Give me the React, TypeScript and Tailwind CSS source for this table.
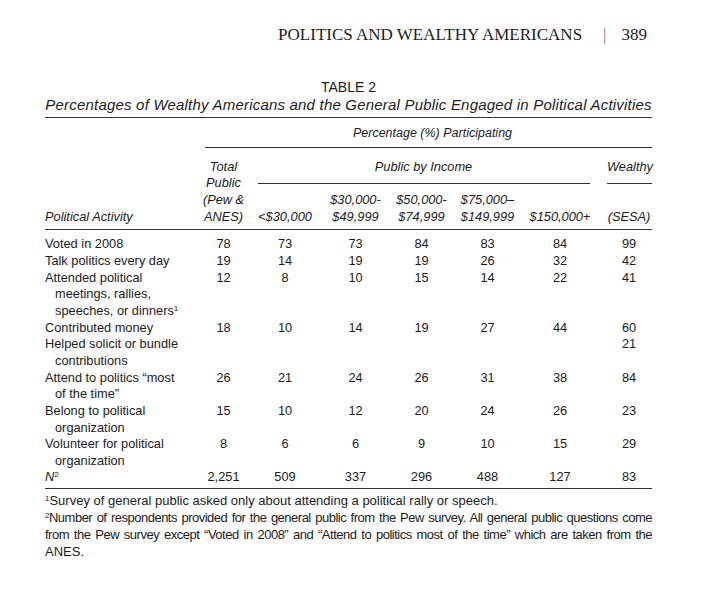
import React from "react";

const sans = "font-['Liberation_Sans',Arial,sans-serif]";

type Row = {
    label: string[];
    sup?: string;
    values: (string | null)[];
};

const rows: Row[] = [
    { label: ["Voted in 2008"], values: ["78", "73", "73", "84", "83", "84", "99"] },
    { label: ["Talk politics every day"], values: ["19", "14", "19", "19", "26", "32", "42"] },
    {
        label: ["Attended political", "meetings, rallies,", "speeches, or dinners"],
        sup: "1",
        values: ["12", "8", "10", "15", "14", "22", "41"],
    },
    { label: ["Contributed money"], values: ["18", "10", "14", "19", "27", "44", "60"] },
    {
        label: ["Helped solicit or bundle", "contributions"],
        values: [null, null, null, null, null, null, "21"],
    },
    {
        label: ["Attend to politics \u201cmost", "of the time\u201d"],
        values: ["26", "21", "24", "26", "31", "38", "84"],
    },
    {
        label: ["Belong to political", "organization"],
        values: ["15", "10", "12", "20", "24", "26", "23"],
    },
    {
        label: ["Volunteer for political", "organization"],
        values: ["8", "6", "6", "9", "10", "15", "29"],
    },
];

const nRow = ["2,251", "509", "337", "296", "488", "127", "83"];

const grid =
    "grid grid-cols-[155px_47px_76px_65px_67px_65px_80px_52px] leading-[16.64px]";

function ValueCells({ values }: { values: (string | null)[] }) {
    return (
        <>
            {values.map((v, i) => (
                <div
                    key={i}
                    className={i === 6 ? "pl-[6px] text-center" : "text-center"}
                >
                    {v}
                </div>
            ))}
        </>
    );
}

export default function App() {
    return (
        <div className={`h-[604px] w-[715px] bg-white text-[#1c1c1c] ${sans}`}>
            <div className="w-[652px] pl-[45px] pt-[25px]">
                {/* running head */}
                <div className="flex justify-end pr-[5px] font-['Liberation_Serif',serif] text-[17px] leading-[20px]">
                    <span>POLITICS AND WEALTHY AMERICANS</span>
                    <span className="ml-[21px] mr-[15px] text-[#777]">|</span>
                    <span>389</span>
                </div>

                {/* title */}
                <div className="mt-[35px] text-center text-[14px] leading-[15px]">
                    TABLE 2
                </div>
                <div className="mt-[2px] text-center text-[15px] italic leading-[15px] tracking-[0.2px]">
                    Percentages of Wealthy Americans and the General Public Engaged in
                    Political Activities
                </div>
                <div className="mt-[5px] h-px bg-[#333]" />

                <div className="mt-[7px] pl-[168px] text-center text-[12.5px] italic leading-[16px]">
                    Percentage (%) Participating
                </div>
                <div className="ml-[160px] mt-[6px] h-px bg-[#333]" />

                {/* column heads */}
                <div
                    className={`${grid} mt-[10.7px] grid-rows-[repeat(4,16.64px)] text-[12.8px] italic`}
                >
                    <div className="col-start-1 row-start-4">Political Activity</div>
                    <div className="col-start-2 row-span-4 row-start-1 text-center">
                        Total
                        <br />
                        Public
                        <br />
                        (Pew &amp;
                        <br />
                        ANES)
                    </div>
                    <div className="col-span-5 col-start-3 row-start-1 text-center">
                        Public by Income
                    </div>
                    <div className="col-start-8 row-start-1 pl-[7px] text-center">
                        Wealthy
                    </div>

                    <div className="col-span-5 col-start-3 row-start-2 flex items-center pl-[11px] pr-[10px]">
                        <div className="h-px w-full bg-[#333]" />
                    </div>
                    <div className="col-start-8 row-start-2 flex items-center pl-[7px]">
                        <div className="h-px w-full bg-[#333]" />
                    </div>

                    <div className="col-start-3 row-start-4 text-center">
                        <span className="not-italic">&lt;</span>$30,000
                    </div>
                    <div className="col-start-4 row-span-2 row-start-3 text-center">
                        $30,000-
                        <br />
                        $49,999
                    </div>
                    <div className="col-start-5 row-span-2 row-start-3 text-center">
                        $50,000-
                        <br />
                        $74,999
                    </div>
                    <div className="col-start-6 row-span-2 row-start-3 text-center">
                        $75,000&ndash;
                        <br />
                        $149,999
                    </div>
                    <div className="col-start-7 row-start-4 text-center">
                        $150,000<span className="not-italic">+</span>
                    </div>
                    <div className="col-start-8 row-start-4 pl-[6px] text-center">
                        (SESA)
                    </div>
                </div>
                <div className="mt-[3.6px] h-px bg-[#333]" />

                {/* body */}
                <div className={`${grid} mt-[6.7px] text-[12.8px]`}>
                    {rows.map((r, i) => (
                        <React.Fragment key={i}>
                            <div>
                                {r.label.map((line, j) => (
                                    <div key={j} className={j > 0 ? "pl-[10px]" : ""}>
                                        {line}
                                        {r.sup && j === r.label.length - 1 && (
                                            <sup className="text-[8px]">{r.sup}</sup>
                                        )}
                                    </div>
                                ))}
                            </div>
                            <ValueCells values={r.values} />
                        </React.Fragment>
                    ))}
                    <div>
                        <span className="italic">N</span>
                        <sup className="text-[8px]">2</sup>
                    </div>
                    <ValueCells values={nRow} />
                </div>
                <div className="mt-[1.7px] h-px bg-[#333]" />

                {/* notes */}
                <div className="mt-[3.5px] text-[13px] leading-[17px]">
                    <div>
                        <sup className="text-[8px]">1</sup>Survey of general public asked
                        only about attending a political rally or speech.
                    </div>
                    <div className="text-justify tracking-[-0.5px] [text-align-last:justify]">
                        <sup className="text-[8px]">2</sup>Number of respondents provided
                        for the general public from the Pew survey. All general public
                        questions come
                    </div>
                    <div className="text-justify tracking-[-0.5px] [text-align-last:justify]">
                        from the Pew survey except &ldquo;Voted in 2008&rdquo; and
                        &ldquo;Attend to politics most of the time&rdquo; which are taken
                        from the
                    </div>
                    <div>ANES.</div>
                </div>
            </div>
        </div>
    );
}
